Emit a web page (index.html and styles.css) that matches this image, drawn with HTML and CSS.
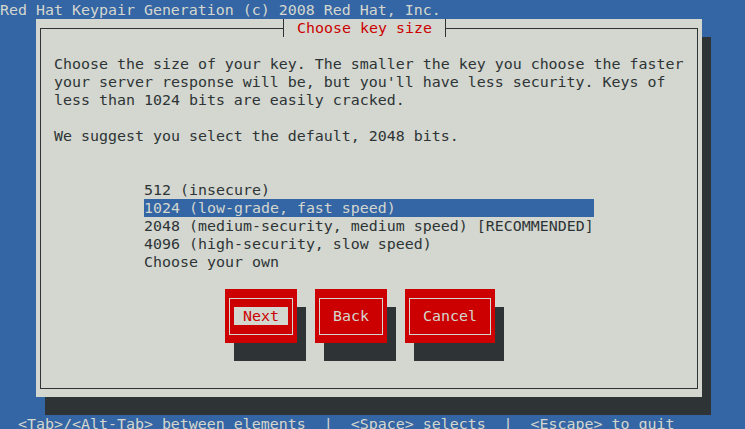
FILE: index.html
```html
<!DOCTYPE html>
<html>
<head>
<meta charset="utf-8">
<title>Choose key size</title>
<link rel="stylesheet" href="styles.css">
</head>
<body>
<div class="screen">
  <div class="topbar">Red Hat Keypair Generation (c) 2008 Red Hat, Inc.</div>
  <div class="window">
    <div class="frame">
      <div class="title">Choose key size</div>
      <div class="text">Choose the size of your key. The smaller the key you choose the faster
your server response will be, but you'll have less security. Keys of
less than 1024 bits are easily cracked.

We suggest you select the default, 2048 bits.</div>
      <ul class="list">
        <li>512 (insecure)</li>
        <li class="selected">1024 (low-grade, fast speed)</li>
        <li>2048 (medium-security, medium speed) [RECOMMENDED]</li>
        <li>4096 (high-security, slow speed)</li>
        <li>Choose your own</li>
      </ul>
      <div class="buttons">
        <div class="btn focus"><div class="btn-inner"><span class="btn-label"> Next </span></div></div>
        <div class="btn"><div class="btn-inner"><span class="btn-label"> Back </span></div></div>
        <div class="btn"><div class="btn-inner"><span class="btn-label"> Cancel </span></div></div>
      </div>
    </div>
  </div>
  <div class="status">  &lt;Tab&gt;/&lt;Alt-Tab&gt; between elements  |  &lt;Space&gt; selects  |  &lt;Escape&gt; to quit</div>
</div>
</body>
</html>
```
FILE: styles.css
```css
html, body {
  margin: 0;
  padding: 0;
  background: #3465a4;
}
.screen {
  width: 745px;
  height: 429px;
  overflow: hidden;
  background: #3465a4;
  font-family: "DejaVu Sans Mono", "Liberation Mono", monospace;
  font-size: 14.95px;
  line-height: 18px;
  color: #d3d7cf;
}
.topbar {
  height: 18px;
  padding-top: 1px;
  white-space: pre;
}
.window {
  margin-left: 36px;
  width: 666px;
  height: 378px;
  box-sizing: border-box;
  padding: 9px 4px 8px 4px;
  background: #d3d7cf;
  box-shadow: 9px 18px 0 #2e3436;
}
.frame {
  position: relative;
  height: 100%;
  box-sizing: border-box;
  border: 1px solid #2e3436;
  padding: 26px 0 0 13px;
  color: #2e3436;
}
.title {
  position: absolute;
  left: 242px;
  top: -10px;
  width: 135px;
  height: 18px;
  padding: 0 13px;
  border-left: 1px solid #2e3436;
  border-right: 1px solid #2e3436;
  background: #d3d7cf;
  color: #cc0000;
  white-space: pre;
}
.text {
  white-space: pre;
}
.list {
  list-style: none;
  margin: 36px 0 0 90px;
  padding: 0;
  width: 450px;
}
.list li {
  height: 18px;
  white-space: pre;
}
.list li.selected {
  background: #3465a4;
  color: #d3d7cf;
}
.buttons {
  display: flex;
  gap: 18px;
  margin: 18px 0 0 171px;
}
.btn {
  background: #cc0000;
  padding: 9px 4px 8px 4px;
  box-shadow: 9px 18px 0 #2e3436;
  color: #d3d7cf;
}
.btn-inner {
  border: 1px solid #d3d7cf;
  padding: 8px 4px 9px 4px;
}
.btn-label {
  display: block;
  height: 18px;
  white-space: pre;
}
.btn.focus .btn-label {
  background: #d3d7cf;
  color: #cc0000;
}
.status {
  margin-top: 18px;
  height: 18px;
  white-space: pre;
}
```
